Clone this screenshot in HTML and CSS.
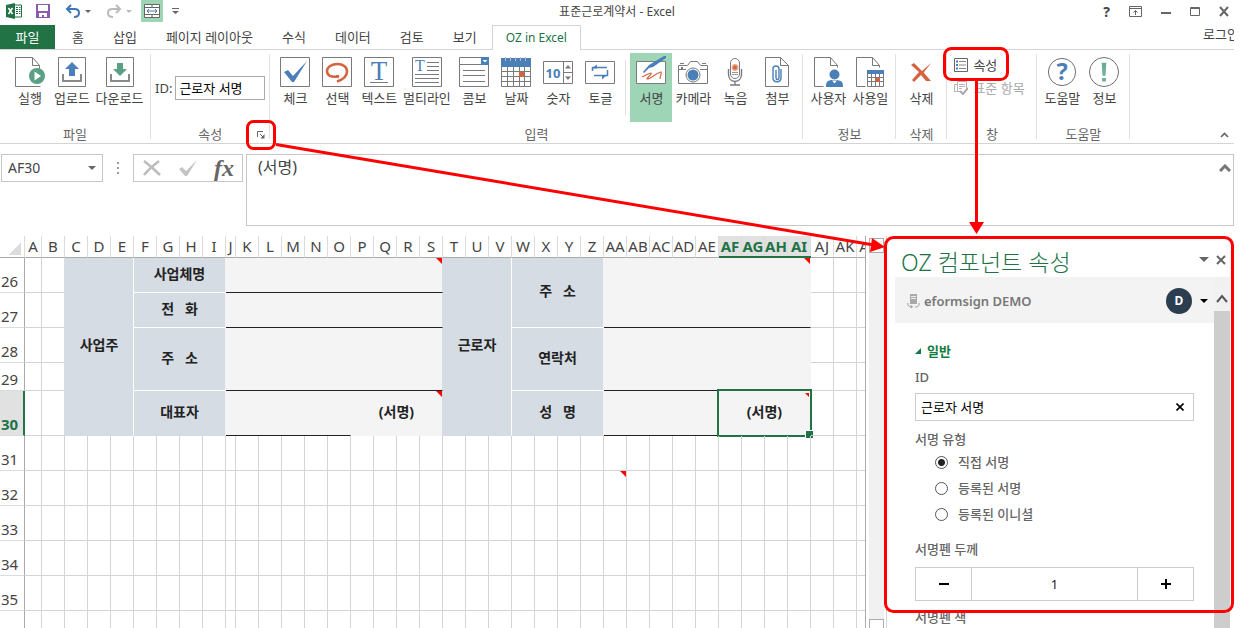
FILE: index.html
```html
<!DOCTYPE html>
<html lang="ko">
<head>
	<meta charset="UTF-8">
	<title>표준근로계약서 - Excel</title>
	<link rel="stylesheet" href="styles.css">
</head>
<body>
<div class="app">
	<header class="titlebar">
		<div class="quick">
			<svg class="logo" width="16" height="16" viewBox="0 0 16 16"><path d="M8 2h7.500v12H8z" fill="#fff" stroke="#217346"/><path d="M10 4.500h2M13 4.500h1.500M10 6.500h2M13 6.500h1.500M10 8.500h2M13 8.500h1.500M10 10.500h2M13 10.500h1.500" stroke="#217346"/><path d="M0 2l9-2v16l-9-2z" fill="#217346"/><path d="M2.500 5l4 6M6.500 5l-4 6" stroke="#fff" stroke-width="1.600"/></svg>
			<button type="button" class="save" aria-label="저장"><svg width="14" height="14" viewBox="0 0 14 14"><path d="M0 0h14v14H0z" fill="#8a5bb0"/><path d="M2 1h10v6H2zM3 9h8v4H8v-2H6v2H3z" fill="#fff"/></svg></button>
			<button type="button" class="undo" aria-label="실행 취소"><svg width="16" height="14" viewBox="0 0 16 14"><path d="M2 5h7.500c3 0 4.500 1.500 4.500 4s-2 4-5 4" fill="none" stroke="#3f77b5" stroke-width="2"/><path d="M6 1L2 5l4 4" fill="none" stroke="#3f77b5" stroke-width="2"/></svg><i class="caret"></i></button>
			<button type="button" class="undo off" aria-label="다시 실행"><svg width="16" height="14" viewBox="0 0 16 14"><path d="M14 5H6.500C3.500 5 2 6.500 2 9s2 4 5 4" fill="none" stroke="#bbb" stroke-width="2"/><path d="M10 1l4 4-4 4" fill="none" stroke="#bbb" stroke-width="2"/></svg><i class="caret"></i></button>
			<button type="button" class="merge" aria-label="병합하고 가운데 맞춤"><svg width="16" height="14" viewBox="0 0 16 14"><path d="M.5.5h15v13H.500zM.500 3.500h15M.500 10.500h15M8 .500v3M8 10.500v3" fill="#fff" stroke="#666"/><path d="M3 7h10M5 5L3 7l2 2M11 5l2 2-2 2" fill="none" stroke="#3f77b5"/></svg></button>
			<button type="button" class="more" aria-label="도구 모음 사용자 지정"><svg width="7" height="6" viewBox="0 0 7 6"><path d="M0 .5h7" stroke="#666"/><path d="M0 3h7L3.500 6z" fill="#666"/></svg></button>
		</div>
		<h1>표준근로계약서 - Excel</h1>
		<div class="win">
			<button type="button">?</button>
			<button type="button" aria-label="리본 표시 옵션"><svg width="13" height="11" viewBox="0 0 13 11"><path d="M.5.5h12v10H.500zM.500 2.500h12" fill="none" stroke="#666"/><path d="M6.500 9V4.500M4.500 6.500l2-2 2 2" fill="none" stroke="#666"/></svg></button>
			<button type="button" aria-label="최소화"><svg width="10" height="11" viewBox="0 0 10 11"><path d="M0 7h10" stroke="#666" stroke-width="2"/></svg></button>
			<button type="button" aria-label="최대화"><svg width="10" height="11" viewBox="0 0 10 11"><path d="M.5 1.500h9v8h-9zM.500 2.500h9" fill="none" stroke="#666"/></svg></button>
			<button type="button" aria-label="닫기"><svg width="10" height="11" viewBox="0 0 10 11"><path d="M1 1l8 9M9 1l-8 9" stroke="#666" stroke-width="2"/></svg></button>
		</div>
	</header>

	<nav class="tabs">
		<a class="file" href="#">파일</a>
		<a href="#">홈</a>
		<a href="#">삽입</a>
		<a href="#">페이지 레이아웃</a>
		<a href="#">수식</a>
		<a href="#">데이터</a>
		<a href="#">검토</a>
		<a href="#">보기</a>
		<a class="active" href="#">OZ in Excel</a>
		<a class="login" href="#">로그인</a>
	</nav>

	<div class="ribbon">
		<section class="group first">
			<div class="tools">
				<button type="button" class="tool"><svg width="30" height="30" viewBox="0 0 30 30"><path d="M17.500.500H.500v29h25M17.500.500l7 8v4M17.500.500v8h7" fill="none" stroke="#7a7a7a"/><circle cx="22" cy="19" r="8" fill="#5b9f85"/><path d="M19.500 14.500l6.500 4.500-6.500 4.500z" fill="#fff"/></svg><span>실행</span></button>
				<button type="button" class="tool"><svg width="30" height="30" viewBox="0 0 30 30"><path d="M1.500.500h27v29h-27z" fill="#fff" stroke="#7a7a7a"/><path d="M6 17v7h18v-7" fill="none" stroke="#8a8a8a" stroke-width="2"/><path d="M15 5l7 7h-4v7h-6v-7H8z" fill="#4a7fb8"/></svg><span>업로드</span></button>
				<button type="button" class="tool wide"><svg width="30" height="30" viewBox="0 0 30 30"><path d="M1.500.500h27v29h-27z" fill="#fff" stroke="#7a7a7a"/><path d="M6 17v7h18v-7" fill="none" stroke="#8a8a8a" stroke-width="2"/><path d="M15 19l7-7h-4V6h-6v6H8z" fill="#5b9f85"/></svg><span>다운로드</span></button>
			</div>
			<h2>파일</h2>
		</section>
		<section class="group">
			<div class="tools idbox">
				<label for="rid">ID:</label>
				<input id="rid" type="text" value="근로자 서명">
			</div>
			<h2>속성</h2>
			<button type="button" class="launcher" aria-label="속성 창 열기"><svg width="8" height="8" viewBox="0 0 8 8"><path d="M.5 6V.500H6" fill="none" stroke="#666"/><path d="M3 3l4 4" stroke="#666"/><path d="M7.500 3v4.500H3.500z" fill="#666"/></svg></button>
		</section>
		<section class="group">
			<div class="tools">
				<button type="button" class="tool"><svg width="30" height="30" viewBox="0 0 30 30"><path d="M.5.500h29v29H.500z" fill="#fff" stroke="#7a7a7a"/><path d="M4 15l4-2 5 6L27 4 14 25h-2z" fill="#4a7fb8"/></svg><span>체크</span></button>
				<button type="button" class="tool"><svg width="30" height="30" viewBox="0 0 30 30"><path d="M.5.500h29v29H.500z" fill="#fff" stroke="#7a7a7a"/><path d="M16 19.500c-7 1-11-1-11-5.500C5 10 10 7 15.500 7S25 10 25 14.500c0 5-4 8-10 10" fill="none" stroke="#d5633f" stroke-width="2.500"/><path d="M14 18h3v4c-1-2-2-2-3-2z" fill="#d5633f"/></svg><span>선택</span></button>
				<button type="button" class="tool"><svg width="30" height="30" viewBox="0 0 30 30"><path d="M.5.500h29v29H.500z" fill="#fff" stroke="#7a7a7a"/><path d="M6 25.500h18" stroke="#7a7a7a"/><text x="15" y="23" text-anchor="middle" class="serif big">T</text></svg><span>텍스트</span></button>
				<button type="button" class="tool wide"><svg width="30" height="30" viewBox="0 0 30 30"><path d="M.5.500h29v29H.500z" fill="#fff" stroke="#7a7a7a"/><path d="M15 5.500h12M15 9.500h12M15 13.500h12M3 17.500h24M3 21.500h24M3 25.500h24" stroke="#7a7a7a"/><text x="8" y="14" text-anchor="middle" class="serif">T</text></svg><span>멀티라인</span></button>
				<button type="button" class="tool"><svg width="30" height="30" viewBox="0 0 30 30"><path d="M.5.500h29v29H.500zM.500 7.500h29" fill="#fff" stroke="#7a7a7a"/><path d="M22 0h8v8h-8z" fill="#4a7fb8"/><path d="M23.500 3h5L26 5.500z" fill="#fff"/><path d="M4 13.500h22M4 18.500h22M4 24.500h22" stroke="#7a7a7a"/></svg><span>콤보</span></button>
				<button type="button" class="tool"><svg width="30" height="30" viewBox="0 0 30 30"><path d="M0 1h30v9H0z" fill="#4a7fb8"/><path d="M.5 10v19.500h29V10M.500 14.500h29M.500 19.500h29M.500 24.500h29M6.500 10v19M12.500 10v19M18.500 10v19M23.500 10v19" fill="none" stroke="#7a7a7a"/><path d="M4.500 0v4M9.500 0v4M14.500 0v4M19.500 0v4M24.500 0v4" stroke="#bbb"/><path d="M18 15h5v5h-5z" fill="#d5633f"/></svg><span>날짜</span></button>
				<button type="button" class="tool"><svg width="30" height="30" viewBox="0 0 30 30"><path d="M.5 4.500h29v22H.500zM20.500 4.500v22M20.500 15.500h9" fill="#fff" stroke="#7a7a7a"/><text x="10" y="21" text-anchor="middle" class="num">10</text><path d="M22 11.500h6L25 8zM22 19.500h6L25 23z" fill="#777"/></svg><span>숫자</span></button>
				<button type="button" class="tool"><svg width="30" height="30" viewBox="0 0 30 30"><path d="M.5 4.500h29v22H.500z" fill="#fff" stroke="#7a7a7a"/><path d="M7.500 14v-3.500H22M22.500 13v5.500H9" fill="none" stroke="#4a7fb8" stroke-width="1.500"/><path d="M7 11.500h5V7.500zM17 18h5l-5 4.500z" fill="#4a7fb8"/></svg><span>토글</span></button>
				<i class="split"></i>
				<button type="button" class="tool on"><svg width="30" height="30" viewBox="0 0 30 30"><path d="M.5 4.500h29v22H.500z" fill="#fff" stroke="#7a7a7a"/><path d="M6 20c3-1 7-4 9-4 1 2-4 4-4 6 4 0 9-6 14-7 1 2-1 3-1 7" fill="none" stroke="#d5633f" stroke-width="1.200"/><path d="M7 15l6-7L28-1h2v2L17 10l-4 1-5 5z" fill="#4a7fb8"/></svg><span>서명</span></button>
				<button type="button" class="tool"><svg width="30" height="30" viewBox="0 0 30 30"><path d="M.5 8.500h9l3-4h7l3 4h7v18H.500zM2 6.500h4M24 6.500h4" fill="#fff" stroke="#7a7a7a"/><path d="M1 12.500h7M22 12.500h7" stroke="#7a7a7a"/><circle cx="15" cy="18" r="7" fill="#fff" stroke="#7a7a7a"/><circle cx="15" cy="18" r="5.500" fill="#4a7fb8"/><path d="M3 10h2v2H3z" fill="#777"/></svg><span>카메라</span></button>
				<button type="button" class="tool"><svg width="30" height="30" viewBox="0 0 30 30"><rect x="10.500" y="1.500" width="9" height="20" rx="4.500" fill="#fff" stroke="#7a7a7a"/><path d="M8.500 12v5c0 5 3 7.500 6.500 7.500s6.500-2.500 6.500-7.500v-5M15 24v4M10 28h10" fill="none" stroke="#7a7a7a" stroke-width="1.400"/><circle cx="15" cy="10.500" r="2.700" fill="#d5633f" stroke="#eda88e" stroke-width="1.500"/><path d="M12 15.500h6M12 17.500h6" stroke="#999"/></svg><span>녹음</span></button>
				<button type="button" class="tool"><svg width="30" height="30" viewBox="0 0 30 30"><path d="M3.500.500h15l8 8v21h-23zM18.500.500v8h8" fill="#fff" stroke="#7a7a7a"/><path d="M14 13v8c0 2 3 2 3 0v-9c0-4-6-4-6 0v9c0 5 8 5 8 0v-9" fill="none" stroke="#4a7fb8" stroke-width="1.400"/></svg><span>첨부</span></button>
			</div>
			<h2>입력</h2>
		</section>
		<section class="group">
			<div class="tools">
				<button type="button" class="tool"><svg width="30" height="30" viewBox="0 0 30 30"><path d="M17.500.500H1.500v29h9M17.500.500l7 8v2M17.500.500v8h7" fill="none" stroke="#7a7a7a"/><path d="M13 30c0-5 1-6 5-7h6c5 1 6 2 6 7z" fill="#4a7fb8"/><circle cx="21.500" cy="17.500" r="5" fill="#4a7fb8"/><path d="M19 23.500l2.500 3 2.500-3z" fill="#fff"/></svg><span>사용자</span></button>
				<button type="button" class="tool"><svg width="30" height="30" viewBox="0 0 30 30"><path d="M17.500.500H1.500v29h9M17.500.500l7 8v2M17.500.500v8h7" fill="none" stroke="#7a7a7a"/><path d="M12 13h17v4H12z" fill="#4a7fb8"/><path d="M12.500 17v12.500h16V17M12.500 20.500h16M12.500 24.500h16M16.500 17v12M20.500 17v12M24.500 17v12" fill="none" stroke="#7a7a7a"/><path d="M21 21h4v4h-4z" fill="#d5633f"/></svg><span>사용일</span></button>
			</div>
			<h2>정보</h2>
		</section>
		<section class="group">
			<div class="tools">
				<button type="button" class="tool"><svg width="30" height="30" viewBox="0 0 30 30"><path d="M5 8l3-2 8 8 9-8c-4 6-7 8-7 10l7 8h-5l-5-6-7 7-2-2 7-8z" fill="#d5633f"/></svg><span>삭제</span></button>
			</div>
			<h2>삭제</h2>
		</section>
		<section class="group panes">
			<div class="tools">
				<button type="button" class="row"><svg width="14" height="14" viewBox="0 0 14 14"><path d="M.5.500h13v13H.500z" fill="#fff" stroke="#666"/><path d="M5 3.500h7M5 7h7M5 10.500h7" stroke="#888"/><path d="M2 3.500h2M2 7h2M2 10.500h2" stroke="#4a7fb8" stroke-width="2"/></svg>속성</button>
				<button type="button" class="row off" disabled><svg width="14" height="14" viewBox="0 0 14 14"><path d="M3.500.500h9v8M3.500.500v10h4M.500 3.500h3M.500 3.500v7h3M5 3.500h6M5 5.500h6M5 7.500h3" fill="none" stroke="#b5b5b5"/><path d="M6 10l3 3 5-6" fill="none" stroke="#aaa" stroke-width="2"/></svg>표준 항목</button>
			</div>
			<h2>창</h2>
		</section>
		<section class="group">
			<div class="tools">
				<button type="button" class="tool"><svg width="32" height="32" viewBox="0 0 32 32"><circle cx="16" cy="16" r="14.500" fill="#fff" stroke="#666"/><text x="16" y="25" text-anchor="middle" class="mark">?</text></svg><span>도움말</span></button>
				<button type="button" class="tool"><svg width="32" height="32" viewBox="0 0 32 32"><circle cx="16" cy="16" r="15.500" fill="#fff" stroke="#666"/><path d="M13.500 6h5l-1 14h-3zM14 22.500h4V26h-4z" fill="#6aae97"/></svg><span>정보</span></button>
			</div>
			<h2>도움말</h2>
		</section>
		<button type="button" class="fold" aria-label="리본 축소"><svg width="9" height="6" viewBox="0 0 9 6"><path d="M1 5l3.500-3.500L8 5" fill="none" stroke="#666" stroke-width="1.700"/></svg></button>
	</div>

	<div class="formula">
		<div class="namebox"><input type="text" value="AF30" aria-label="이름 상자"><button type="button" aria-label="이름 목록"><i class="caret"></i></button></div>
		<i class="dots"></i>
		<div class="fxbox">
			<button type="button" aria-label="취소"><svg width="20" height="18" viewBox="0 0 20 18"><path d="M2 2c4 3 11 9 16 14M17 2C12 6 6 11 2 16" fill="none" stroke="#bdbdbd" stroke-width="2.500"/></svg></button>
			<button type="button" aria-label="입력"><svg width="20" height="18" viewBox="0 0 20 18"><path d="M1 10l3-2 4 4L19 1 9 17H7z" fill="#c4c4c4"/></svg></button>
			<button type="button" class="fx">fx</button>
		</div>
		<textarea aria-label="수식 입력줄">(서명)</textarea>
		<button type="button" class="shrink" aria-label="수식 입력줄 축소"><svg width="12" height="8" viewBox="0 0 12 8"><path d="M1 7l5-5 5 5" fill="none" stroke="#777" stroke-width="3"/></svg></button>
	</div>

	<main class="work">
		<div class="sheet"><table id="grid"></table></div>
		<div class="vbar"><i class="up"></i><i class="track"></i><i class="up"></i></div>
		<aside class="pane">
			<div class="panehead">
				<h2>OZ 컴포넌트 속성</h2>
				<button type="button" aria-label="작업창 옵션"><i class="caret big"></i></button>
				<button type="button" aria-label="작업창 닫기"><svg width="10" height="10" viewBox="0 0 10 10"><path d="M1 1l8 8M9 1L1 9" stroke="#666" stroke-width="2"/></svg></button>
			</div>
			<div class="panebody">
				<div class="content">
					<div class="account">
						<svg width="13" height="14" viewBox="0 0 13 14"><path d="M3 0h7v10H3z" fill="#aaa"/><path d="M4 2.500h5M4 4.500h5" stroke="#eee"/><path d="M1 9c-1 3 2 4 4 4M12 9c1 3-2 4-4 4M3.500 11L5.500 13l-2 1" fill="none" stroke="#999"/></svg>
						<strong>eformsign DEMO</strong>
						<span class="avatar">D</span>
						<button type="button" aria-label="계정 메뉴"><i class="caret black"></i></button>
					</div>
					<form class="props">
						<h3><svg width="6" height="6" viewBox="0 0 6 6"><path d="M6 0v6H0z" fill="#107c41"/></svg>일반</h3>
						<label class="name" for="pid">ID</label>
						<div class="field"><input id="pid" type="text" value="근로자 서명"><button type="button" aria-label="지우기"><svg width="8" height="8" viewBox="0 0 8 8"><path d="M.5.500l7 7M7.500.500l-7 7" stroke="#000" stroke-width="1.600"/></svg></button></div>
						<fieldset>
							<legend class="name">서명 유형</legend>
							<label><input type="radio" name="kind" checked>직접 서명</label>
							<label><input type="radio" name="kind">등록된 서명</label>
							<label><input type="radio" name="kind">등록된 이니셜</label>
						</fieldset>
						<label class="name" for="pen">서명펜 두께</label>
						<div class="stepper">
							<button type="button" aria-label="줄이기"><svg width="12" height="12" viewBox="0 0 12 12"><path d="M1 6h10" stroke="#000" stroke-width="2"/></svg></button>
							<input id="pen" type="text" value="1">
							<button type="button" aria-label="늘리기"><svg width="12" height="12" viewBox="0 0 12 12"><path d="M1 6h10M6 1v10" stroke="#000" stroke-width="2"/></svg></button>
						</div>
						<p class="name">서명펜 색</p>
					</form>
				</div>
				<div class="pbar"><svg width="12" height="9" viewBox="0 0 12 9"><path d="M1 8l5-6 5 6" fill="none" stroke="#555" stroke-width="2"/></svg><i></i></div>
			</div>
		</aside>
	</main>

	<!-- 안내 표시 -->
	<svg class="guide" width="1244" height="628" viewBox="0 0 1244 628">
		<g fill="none" stroke="#f00" stroke-width="3">
			<rect x="247.500" y="121.500" width="27" height="27" rx="6"/>
			<rect x="944.500" y="48.500" width="63" height="31" rx="7"/>
			<rect x="885.500" y="237.500" width="347" height="374" rx="8"/>
			<path d="M276 144.500L874 245M976.500 80v146"/>
		</g>
		<path d="M870 252l2-14 13 9zM969 222h15l-7.500 12z" fill="#f00"/>
	</svg>
</div>
<script src="script.js"></script>
</body>
</html>
```

FILE: styles.css
```css
*{ margin:0; padding:0; box-sizing:border-box; }
body{ background:#fff; color:#444; font:13px/18px "Noto Sans","Noto Sans CJK KR",sans-serif; }
a{ color:inherit; text-decoration:none; }
button,input,textarea{ font:inherit; color:inherit; background:none; border:0; outline:0; }
h1,h2,h3{ font-weight:normal; }
svg{ display:block; flex:none; }

.app{ position:relative; display:flex; flex-direction:column; height:100vh; padding-right:10px; overflow:hidden; }
.caret{ display:block; width:0; height:0; border:3px solid transparent; border-top-color:#666; border-bottom:0; }
.caret.big{ border-width:5px; border-bottom:0; }
.caret.black{ border-width:4px; border-top-color:#000; border-bottom:0; }

/* 제목 표시줄 */
.titlebar{ display:grid; grid-template-columns:1fr auto 1fr; align-items:center; height:25px; }
.titlebar h1{ padding-bottom:1px; font-size:12px; }
.quick{ display:flex; align-items:center; align-self:start; height:22px; padding-left:6px; }
.quick button{ display:flex; align-items:center; justify-content:center; gap:4px; height:22px; }
.quick .save{ width:42px; }
.quick .undo{ width:27px; margin-right:14px; }
.quick .off .caret{ border-top-color:#bbb; }
.quick .merge{ width:22px; margin-right:9px; background:#9fd5b7; }
.quick .undo.off{ margin-right:9px; }
.win{ display:flex; justify-content:flex-end; align-items:center; gap:19px; padding:0 5px 2px 0; }
.win button{ font-weight:bold; font-size:14px; }

/* 탭 */
.tabs{ display:flex; height:25px; border-bottom:1px solid #d4d4d4; line-height:24px; white-space:nowrap; }
.tabs a{ padding:0 14px; margin-right:1px; height:24px; }
.tabs .file{ width:55px; margin-right:3px; background:#217346; color:#fff; text-align:center; }
.tabs .active{ height:25px; padding:0 13px; border:1px solid #d4d4d4; border-bottom:0; background:#fff; color:#217346; font-size:12px; line-height:23px; }
.tabs .login{ width:31px; margin:0 0 0 auto; padding:0; overflow:hidden; line-height:18px; }

/* 리본 */
.ribbon{ display:flex; height:94px; border-bottom:1px solid #d4d4d4; }
.group{ position:relative; display:flex; flex-direction:column; margin-right:1px; padding-top:3px; }
.group:after{ content:""; position:absolute; top:4px; right:-1px; bottom:4px; width:1px; background:#e1e1e1; }
.group h2{ height:21px; font-size:13px; line-height:24px; text-align:center; color:#666; }
.tools{ display:flex; flex:none; height:69px; padding:0 4px; }
.first .tools{ padding-left:9px; }
.tool{ display:flex; flex-direction:column; align-items:center; width:42px; height:69px; padding-top:4px; white-space:nowrap; }
.tool svg{ height:30px; overflow:visible; }
.tool span{ margin-top:2px; }
.tool.wide{ width:53px; }
.tool.on{ background:#9fd5b7; }
.split{ width:1px; height:55px; margin:7px 4px 0; background:#e1e1e1; }
.serif{ font:16px "Liberation Serif",serif; fill:#4a7fb8; }
.serif.big{ font-size:27px; }
.num{ font:bold 13px "Noto Sans",sans-serif; fill:#4a7fb8; }
.mark{ font:bold 25px "Noto Sans",sans-serif; fill:#4a7fb8; }
.idbox{ gap:3px; align-items:center; }
.idbox input{ width:90px; height:24px; padding-left:3px; border:1px solid #ababab; color:#000; }
.launcher{ position:absolute; right:4px; bottom:4px; width:8px; height:8px; }
.panes{ width:89px; }
.panes .tools{ flex-direction:column; padding-left:7px; }
.row{ display:flex; align-items:center; gap:5px; height:23px; white-space:nowrap; }
.row.off{ color:#aaa; }
.fold{ margin:auto 5px 5px auto; }

/* 수식 입력줄 */
.formula{ position:relative; display:flex; align-items:flex-start; height:92px; padding:10px 0 0 1px; }
.namebox{ display:flex; align-items:center; width:102px; height:28px; border:1px solid #c6c6c6; }
.namebox input{ width:86px; padding-left:6px; font-size:14px; }
.namebox .caret{ border-width:4px; border-bottom:0; }
.dots{ width:2px; height:12px; margin:8px 14px; background:repeating-linear-gradient(#999 0 2px,#fff 2px 5px); }
.fxbox{ display:flex; align-items:center; justify-content:space-around; width:110px; height:28px; margin-right:3px; border:1px solid #c6c6c6; }
.fx{ font:italic bold 24px/24px "Liberation Serif",serif; color:#666; }
.formula textarea{ flex:1; height:72px; padding:1px 11px; border:1px solid #c6c6c6; font-size:16px; line-height:22px; resize:none; }
.shrink{ position:absolute; right:3px; top:20px; }

/* 시트 */
.work{ flex:1; display:flex; min-height:0; }
.sheet{ flex:1; min-width:0; overflow:hidden; border-right:1px solid #ababab; }
.sheet table{ table-layout:fixed; width:1px; border-collapse:separate; border-spacing:0; }
.sheet th{ font-weight:normal; font-size:15px; line-height:18px; white-space:nowrap; }
.sheet thead th{ height:22px; padding-bottom:2px; border-right:1px solid #dcdcdc; border-bottom:1px solid #ababab; }
.sheet thead th span{ display:flex; justify-content:center; }
.sheet thead .corner{ background:linear-gradient(135deg,transparent 50%,#dcdcdc 50%) 8px 6px/13px 13px no-repeat; }
.sheet tbody th{ padding:0 0 2px 1px; border-right:1px solid #ababab; border-bottom:1px solid #dcdcdc; vertical-align:bottom; text-align:left; }
.sheet thead .sel{ position:relative; background:#e1e1e1; color:#217346; font-weight:bold; }
.sheet thead .sel:after{ content:""; position:absolute; left:0; right:-1px; bottom:-1px; height:2px; background:#217346; }
.sheet tbody .sel{ background:#e1e1e1; border-right:2px solid #217346; color:#217346; font-weight:bold; }
.sheet td{ position:relative; padding-bottom:3px; border-right:1px solid #d4d4d4; border-bottom:1px solid #d4d4d4; color:#222; font-size:14px; line-height:20px; font-weight:bold; text-align:center; white-space:pre; }
.sheet .edge{ border-right-color:#d6dce4; }
.sheet .side{ background:#d6dce4; border-right-color:#fff; border-bottom-color:#d6dce4; }
.sheet .head{ background:#d6dce4; border-right-color:#f4f4f4; border-bottom-color:#fff; }
.sheet .fill{ background:#f4f4f4; border-right-color:#f4f4f4; border-bottom-color:#222; }
.sheet .soft{ border-bottom-color:#f4f4f4; }
.sheet .last{ border-bottom-color:#d6dce4; }
.sheet .toside{ border-right-color:#d6dce4; }
.sheet .note:after{ content:""; position:absolute; top:0; right:0; border:3px solid #f00; border-left-color:transparent; border-bottom-color:transparent; }
.sheet .small:after{ top:2px; right:1px; border-width:2px; }
.cursor{ position:absolute; inset:-2px; border:2px solid #217346; }
.cursor:after{ content:""; position:absolute; right:-4px; bottom:-4px; width:7px; height:7px; border:1px solid #fff; background:#217346; }

.vbar{ display:flex; flex-direction:column; width:20px; padding:2px 2px 0 3px; }
.vbar .up{ height:15px; border:1px solid #ababab; background:#fff; flex:none; }
.vbar .track{ flex:1; background:#f1f1f1; }
.vbar .up:last-child{ height:9px; border-bottom:0; }

/* 속성 작업창 */
.pane{ display:flex; flex-direction:column; width:348px; padding:0 4px 0 8px; border-left:1px solid #d4d4d4; }
.panehead{ display:flex; align-items:center; flex:none; height:41px; padding:0 4px 0 6px; gap:7px; }
.panehead h2{ flex:1; padding-top:11px; color:#217346; font-size:23px; line-height:30px; font-weight:300; }
.panehead button{ padding-top:6px; }
.panebody{ flex:1; display:flex; min-height:0; }
.content{ flex:1; overflow:hidden; }
.account{ display:flex; align-items:center; height:46px; padding:2px 6px 0 12px; background:#f3f3f3; color:#777; }
.account strong{ flex:1; padding-left:4px; font-weight:600; }
.avatar{ width:26px; height:26px; margin-right:8px; border-radius:50%; background:#2b3d4f; color:#fff; font-size:12px; line-height:26px; font-weight:bold; text-align:center; }
.props{ padding:18px 20px 0; color:#666; font-weight:500; }
.props h3{ display:flex; align-items:center; gap:6px; height:20px; color:#107c41; font-size:13px; font-weight:bold; }
.props .name{ display:block; line-height:20px; }
.props > .name{ margin-top:6px; }
.field{ display:flex; height:28px; margin-top:6px; border:1px solid #ccc; font-weight:normal; color:#000; }
.field input{ flex:1; padding-left:5px; }
.field button{ width:27px; display:flex; align-items:center; justify-content:center; }
fieldset{ border:0; margin-top:8px; }
fieldset label{ display:flex; align-items:center; gap:10px; height:26px; padding-left:20px; }
fieldset input{ appearance:none; width:13px; height:13px; border:1px solid #555; border-radius:50%; }
fieldset input:checked{ background:radial-gradient(#222 0 3px,#fff 4px); }
fieldset + .name{ padding-top:6px; }
.stepper{ display:flex; height:34px; margin-top:8px; border:1px solid #ccc; color:#222; font-weight:normal; }
.stepper button{ display:flex; align-items:center; justify-content:center; width:55px; }
.stepper input{ flex:1; min-width:0; text-align:center; border:1px solid #ccc; border-width:0 1px; }
.pbar{ display:flex; flex-direction:column; align-items:center; width:16px; padding-top:17px; background:#f1f1f1; }
.pbar i{ flex:1; width:16px; margin-top:8px; background:#cdcdcd; }

.guide{ position:absolute; left:0; top:0; pointer-events:none; }
```

FILE: script.js
```js
var cols = 'A B C D E F G H I J K L M N O P Q R S T U V W X Y Z AA AB AC AD AE AF AG AH AI AJ AK AL'.split(' ');
var heights = {26:35, 27:35, 28:35, 29:28, 30:45, 31:35, 32:35, 33:35, 34:35, 35:35, 36:35};
// [가로 칸, 세로 칸, class, 글자]
var A = [1,1,''], B = [1,1,'edge'];
var rows = {
	26: [A, B, [3,5,'side','사업주'], [4,1,'head','사업체명'], [10,1,'fill toside note'], [3,5,'side','근로자'], [4,2,'head','주   소'], [9,2,'fill note'], A, A, A],
	27: [A, B, [4,1,'head','전   화'], [10,1,'fill toside'], A, A, A],
	28: [A, B, [4,2,'head','주   소'], [10,2,'fill toside'], [4,2,'head','연락처'], [9,2,'fill'], A, A, A],
	29: [A, B, A, A, A],
	30: [A, B, [4,1,'head last','대표자'], [6,1,'fill'], [4,1,'fill soft toside note','(서명)'], [4,1,'head last','성   명'], [5,1,'fill'], [4,1,'fill soft note small','(서명)<i class="cursor"></i>'], A, A, A]
};
var html = '<colgroup><col style="width:25px">';
cols.forEach(function(c){
	html += '<col style="width:' + (c == 'A' ? 17 : c == 'J' ? 10 : 23) + 'px">';
});
html += '</colgroup><thead><tr><th class="corner"></th>';
cols.forEach(function(c, i){
	html += '<th' + (i > 30 && i < 35 ? ' class="sel"' : '') + '><span>' + c + '</span></th>';
});
html += '</tr></thead><tbody>';
for(var n=26; n<=36; n++){
	var cells = rows[n] || cols.map(function(c){ return c == 'AA' && n == 32 ? [1,1,'note'] : A; });
	html += '<tr style="height:' + heights[n] + 'px"><th' + (n == 30 ? ' class="sel"' : '') + '>' + n + '</th>';
	cells.forEach(function(c){
		html += '<td colspan="' + c[0] + '" rowspan="' + c[1] + '" class="' + c[2] + '">' + (c[3] || '') + '</td>';
	});
	html += '</tr>';
}
document.getElementById('grid').innerHTML = html + '</tbody>';
```
